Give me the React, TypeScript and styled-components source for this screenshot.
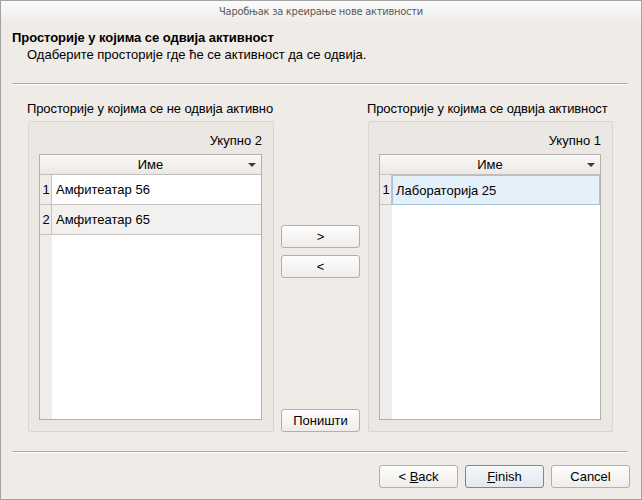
import React from "react";
import styled, { createGlobalStyle } from "styled-components";

const Global = createGlobalStyle`
  html, body { margin: 0; padding: 0; background: #efebe7; }
  body { font-family: "Liberation Sans", Arial, sans-serif; font-size: 13px; color: #000; }
  * { box-sizing: border-box; }
`;

const Window = styled.div`
  width: 642px;
  height: 500px;
  border: 1px solid #a3a3a3;
  background: #efebe7;
  display: flex;
  flex-direction: column;
`;

const TitleBar = styled.div`
  height: 21px;
  flex: none;
  display: flex;
  align-items: center;
  justify-content: center;
  background: linear-gradient(#fbfbfb, #efedea);
  color: #5a5a5a;
  font-family: "DejaVu Sans Condensed", "DejaVu Sans", sans-serif;
  font-stretch: condensed;
  font-size: 11px;
  letter-spacing: -0.25px;
`;

const Header = styled.div`
  padding: 8px 0 0 11px;
  height: 61px;
`;

const Heading = styled.div`
  font-weight: bold;
  font-size: 13px;
  line-height: 16px;
  letter-spacing: -0.05px;
`;

const SubHeading = styled.div`
  margin-left: 15px;
  margin-top: 1px;
  line-height: 16px;
`;

const Separator = styled.div`
  margin: 0 13px 0 11px;
  height: 2px;
  border-top: 1px solid #adaaa6;
  border-bottom: 1px solid #ffffff;
  flex: none;
`;

const Main = styled.div`
  display: grid;
  grid-template-columns: 247px 79px 246px;
  grid-template-rows: 20px 311px;
  column-gap: 7px;
  padding: 16px 27px 0 26px;
  height: 366px;
`;

const GroupLabel = styled.div`
  line-height: 16px;
  white-space: nowrap;
  letter-spacing: -0.1px;
`;

const Panel = styled.div`
  margin-left: 1px;
  border: 1px solid #d9d5d0;
  border-radius: 2px;
  background: #ebe8e4;
  display: flex;
  flex-direction: column;
  padding: 0 11px 11px 10px;
`;

const Count = styled.div`
  text-align: right;
  height: 32px;
  line-height: 16px;
  padding-top: 11px;
`;

const Table = styled.div`
  flex: 1;
  border: 1px solid #b3afab;
  background: #fff;
  display: flex;
  flex-direction: column;
`;

const HeaderRow = styled.div`
  height: 20px;
  flex: none;
  border-bottom: 1px solid #c3bfbb;
  background: linear-gradient(#faf9f7, #ebe8e4);
  display: flex;
  align-items: center;
  justify-content: center;
  position: relative;
  line-height: 19px;
`;

const SortArrow = styled.span`
  position: absolute;
  right: 5px;
  top: 8px;
  width: 0;
  height: 0;
  border-left: 4px solid transparent;
  border-right: 4px solid transparent;
  border-top: 4px solid #3c3c3c;
`;

const Body = styled.div`
  flex: 1;
  display: flex;
  flex-direction: column;
  background: linear-gradient(to right, #efecea 0, #efecea 12px, #fff 12px);
`;

const Row = styled.div<{ $alt?: boolean }>`
  height: 30px;
  display: flex;
  border-bottom: 1px solid #c7c3bf;
  background: ${(p) => (p.$alt ? "#f3f1ef" : "#ffffff")};
`;

const RowNum = styled.div`
  width: 12px;
  flex: none;
  background: #efecea;
  border-right: 1px solid #c7c3bf;
  display: flex;
  align-items: center;
  justify-content: center;
  padding-left: 1px;
`;

const Cell = styled.div<{ $selected?: boolean }>`
  flex: 1;
  display: flex;
  align-items: center;
  padding-left: 3px;
  background: ${(p) => (p.$selected ? "#e4f0fa" : "transparent")};
  border: 1px solid ${(p) => (p.$selected ? "#a6c3da" : "transparent")};
  margin-bottom: ${(p) => (p.$selected ? "-1px" : "0")};
`;

const Middle = styled.div`
  grid-row: 2;
  grid-column: 2;
  display: flex;
  flex-direction: column;
  padding-top: 104px;
  gap: 7px;
`;

const Button = styled.button<{ $default?: boolean }>`
  width: 79px;
  height: 23px;
  flex: none;
  font-family: "Liberation Sans", Arial, sans-serif;
  font-size: 13px;
  color: #000;
  border-radius: 3px;
  border: 1px solid ${(p) => (p.$default ? "#5d8fbd" : "#b1aeab")};
  background: ${(p) =>
    p.$default
      ? "linear-gradient(#f4f7fa, #e3e9ef)"
      : "linear-gradient(#fdfdfd, #efedeb)"};
  padding: 0;
  display: flex;
  align-items: center;
  justify-content: center;
  box-shadow: inset 0 1px 0 rgba(255,255,255,0.7);
`;

const Spacer = styled.div`
  flex: 1;
`;

const U = styled.span`
  text-decoration: underline;
`;

const Footer = styled.div`
  display: flex;
  justify-content: flex-end;
  gap: 7px;
  padding: 12px 11px 0 0;
`;

export default function App() {
  return (
    <>
      <Global />
      <Window>
        <TitleBar>Чаробњак за креирање нове активности</TitleBar>
        <Header>
          <Heading>Просторије у којима се одвија активност</Heading>
          <SubHeading>Одаберите просторије где ће се активност да се одвија.</SubHeading>
        </Header>
        <Separator />
        <Main>
          <GroupLabel>Просторије у којима се не одвија активно</GroupLabel>
          <div />
          <GroupLabel>Просторије у којима се одвија активност</GroupLabel>
          <Panel>
            <Count>Укупно 2</Count>
            <Table>
              <HeaderRow>
                Име
                <SortArrow />
              </HeaderRow>
              <Body>
                <Row>
                  <RowNum>1</RowNum>
                  <Cell>Амфитеатар 56</Cell>
                </Row>
                <Row $alt>
                  <RowNum>2</RowNum>
                  <Cell>Амфитеатар 65</Cell>
                </Row>
              </Body>
            </Table>
          </Panel>
          <Middle>
            <Button>&gt;</Button>
            <Button>&lt;</Button>
            <Spacer />
            <Button>Поништи</Button>
          </Middle>
          <Panel>
            <Count>Укупно 1</Count>
            <Table>
              <HeaderRow>
                Име
                <SortArrow />
              </HeaderRow>
              <Body>
                <Row>
                  <RowNum>1</RowNum>
                  <Cell $selected>Лабораторија 25</Cell>
                </Row>
              </Body>
            </Table>
          </Panel>
        </Main>
        <Separator />
        <Footer>
          <Button>
            &lt;&nbsp;<U>B</U>ack
          </Button>
          <Button $default>
            <U>F</U>inish
          </Button>
          <Button>Cancel</Button>
        </Footer>
      </Window>
    </>
  );
}
